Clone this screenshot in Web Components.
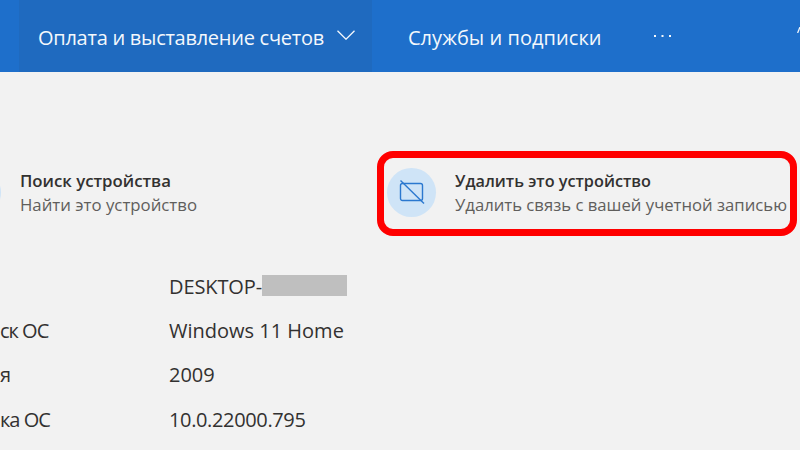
<!DOCTYPE html>
<html lang="ru">
<head>
<meta charset="utf-8">
<style>
  html, body { margin: 0; height: 100%; overflow: hidden; background: #f2f2f2; }
  body { font-family: "Open Sans", "Noto Sans", sans-serif; color: #323130; }
</style>
</head>
<body>
<top-bar>
  <nav-tab selected chevron style="letter-spacing:-.26px">Оплата и выставление счетов</nav-tab>
  <nav-tab style="--tab-left:36px;letter-spacing:.05px">Службы и подписки</nav-tab>
  <nav-more></nav-more>
</top-bar>
<device-page>
  <device-action slot="actions" title-text="Поиск устройства" sub="Найти это устройство" style="--title-size:16.8px;--sub-size:16.8px"></device-action>
  <device-action slot="actions" title-text="Удалить это устройство" sub="Удалить связь с вашей учетной записью" icon="unlink" marked></device-action>
  <spec-row slot="specs"><span style="letter-spacing:-.1px">DESKTOP-</span><redact-box></redact-box></spec-row>
  <spec-row slot="specs" label="ск ОС">Windows 11 Home</spec-row>
  <spec-row slot="specs" label="я">2009</spec-row>
  <spec-row slot="specs" label="ка ОС"><span style="letter-spacing:-.36px">10.0.22000.795</span></spec-row>
</device-page>
<script>
class TopBar extends HTMLElement {
    constructor() {
        super();
        this.attachShadow({ mode: "open" }).innerHTML = /*html*/ `
            <style>
                :host {
                    display: flex;
                    height: 72px;
                    padding-left: 19px;
                    background-color: #1e6fcb;
                    color: #f4f8fc;
                    overflow: hidden;
                }
                /* the next menu item starts right at the window edge */
                svg { margin: 27px 0 0 auto; }
            </style>
            <slot></slot>
            <svg width="3" height="6" viewBox="0 0 3 6" fill="none" stroke="currentColor" stroke-width="1.3"><path d="M3 0 .6 6"/></svg>
        `;
    }
}
customElements.define("top-bar", TopBar);

class NavTab extends HTMLElement {
    constructor() {
        super();
        const chevron = this.hasAttribute("chevron") ? /*html*/ `
            <svg width="18" height="10" viewBox="0 0 18 10"><path d="M.5.7 9 9.2 17.5.7" fill="none" stroke="currentColor" stroke-width="1.3"/></svg>
        ` : "";
        this.attachShadow({ mode: "open" }).innerHTML = /*html*/ `
            <style>
                :host {
                    display: flex;
                    align-items: center;
                    gap: 13px;
                    padding: 2px 17px 0 var(--tab-left, 19px);
                    font-size: 20px;
                    white-space: nowrap;
                }
                :host([selected]) { background-color: #1f6abf; }
                svg { margin-top: -5px; }
            </style>
            <slot></slot>${chevron}
        `;
    }
}
customElements.define("nav-tab", NavTab);

class NavMore extends HTMLElement {
    constructor() {
        super();
        this.attachShadow({ mode: "open" }).innerHTML = /*html*/ `
            <style>
                :host { display: flex; align-items: center; padding-left: 35px; }
            </style>
            <svg width="17" height="4" viewBox="0 0 17 4" fill="currentColor">
                <rect x="0" y="1" width="2" height="2"/><rect x="7.5" y="1" width="2" height="2"/><rect x="15" y="1" width="2" height="2"/>
            </svg>
        `;
    }
}
customElements.define("nav-more", NavMore);

class DevicePage extends HTMLElement {
    constructor() {
        super();
        this.attachShadow({ mode: "open" }).innerHTML = /*html*/ `
            <style>
                :host { display: block; padding-top: 95px; }
                #actions { display: flex; margin-left: -48px; }
                #specs { display: grid; margin-top: 47px; }
            </style>
            <div id="actions"><slot name="actions"></slot></div>
            <div id="specs"><slot name="specs"></slot></div>
        `;
    }
}
customElements.define("device-page", DevicePage);

class DeviceAction extends HTMLElement {
    constructor() {
        super();
        const icon = this.getAttribute("icon") === "unlink" ? /*html*/ `
            <svg width="26" height="24" viewBox="0 0 26 24" fill="none" stroke="#2b78cf" stroke-width="1.4">
                <rect x="1.5" y="3.5" width="22" height="17" rx="2"/>
                <path d="M1.5.5 25 23.5"/>
            </svg>
        ` : "";
        this.attachShadow({ mode: "open" }).innerHTML = /*html*/ `
            <style>
                :host {
                    display: flex;
                    align-items: center;
                    gap: 19px;
                    width: 435px;
                    flex: none;
                    position: relative;
                    white-space: nowrap;
                }
                #circle {
                    width: 49px;
                    height: 49px;
                    border-radius: 50%;
                    background-color: #cfe4f7;
                    display: flex;
                    align-items: center;
                    justify-content: center;
                    flex: none;
                }
                #text { margin-top: 2px; }
                #title { font-size: var(--title-size, 16.25px); font-weight: 600; line-height: 24px; color: #323130; }
                #sub { font-size: var(--sub-size, 16.7px); line-height: 24px; color: #605e5c; }
                #mark {
                    display: none;
                    position: absolute;
                    left: -10px;
                    top: -16px;
                    box-sizing: border-box;
                    width: 420px;
                    height: 85px;
                    border: 7px solid #ff0000;
                    border-radius: 16px;
                }
                :host([marked]) #mark { display: block; }
            </style>
            <div id="circle">${icon}</div>
            <div id="text">
                <div id="title">${this.getAttribute("title-text")}</div>
                <div id="sub">${this.getAttribute("sub")}</div>
            </div>
            <div id="mark"></div>
        `;
    }
}
customElements.define("device-action", DeviceAction);

class SpecRow extends HTMLElement {
    constructor() {
        super();
        this.attachShadow({ mode: "open" }).innerHTML = /*html*/ `
            <style>
                :host {
                    display: grid;
                    grid-template-columns: 169px auto;
                    height: 44.33px;
                    align-items: center;
                    font-size: 20px;
                    color: #323130;
                    white-space: nowrap;
                }
                #label { letter-spacing: -1px; }
                #value { display: flex; align-items: center; }
            </style>
            <div id="label">${this.getAttribute("label") || ""}</div>
            <div id="value"><slot></slot></div>
        `;
    }
}
customElements.define("spec-row", SpecRow);

class RedactBox extends HTMLElement {
    constructor() {
        super();
        this.attachShadow({ mode: "open" }).innerHTML = /*html*/ `
            <style>
                :host { display: block; width: 85px; height: 21px; margin-top: -1px; background-color: #bfbfbf; }
            </style>
        `;
    }
}
customElements.define("redact-box", RedactBox);
</script>
</body>
</html>
